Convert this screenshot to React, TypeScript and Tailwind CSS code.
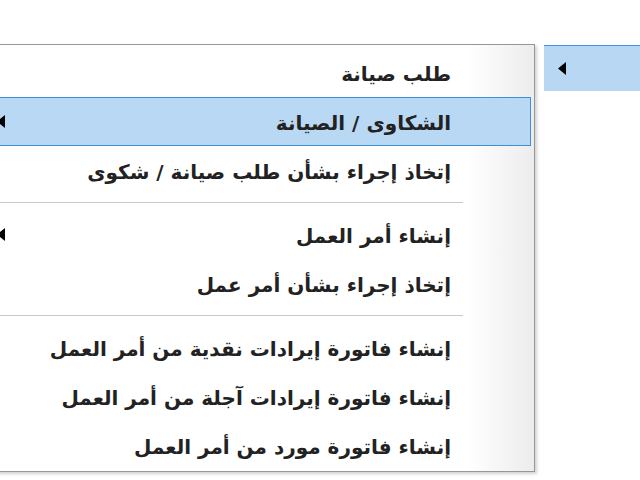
type MenuEntry =
  | { kind: "item"; label: string; submenu?: boolean; active?: boolean }
  | { kind: "separator" };

const entries: MenuEntry[] = [
  { kind: "item", label: "طلب صيانة" },
  { kind: "item", label: "الشكاوى / الصيانة", submenu: true, active: true },
  { kind: "item", label: "إتخاذ إجراء بشأن طلب صيانة / شكوى" },
  { kind: "separator" },
  { kind: "item", label: "إنشاء أمر العمل", submenu: true },
  { kind: "item", label: "إتخاذ إجراء بشأن أمر عمل" },
  { kind: "separator" },
  { kind: "item", label: "إنشاء فاتورة إيرادات نقدية من أمر العمل" },
  { kind: "item", label: "إنشاء فاتورة إيرادات آجلة من أمر العمل" },
  { kind: "item", label: "إنشاء فاتورة مورد من أمر العمل" },
];

function Arrow() {
  return (
    <svg width="8" height="13" viewBox="0 0 8 13" className="shrink-0">
      <path d="M8 0 L8 13 L0 6.5 Z" fill="#000" />
    </svg>
  );
}

export default function App() {
  return (
    <div
      className="w-[640px] h-[480px] overflow-hidden bg-white flex items-start pt-[44px]"
      style={{ fontFamily: '"DejaVu Sans", Tahoma, sans-serif' }}
    >
      <div
        dir="rtl"
        className="ml-[-20px] w-[555px] shrink-0 border border-[#979797] bg-gradient-to-l from-[#ececec] via-white via-[12%] to-white pt-[3px] pb-[1px] shadow-[2px_2px_3px_rgba(0,0,0,0.18)]"
      >
        {entries.map((entry, i) =>
          entry.kind === "separator" ? (
            <div key={i} className="h-[15px] flex items-center">
              <div className="h-[2px] w-full mr-[71px] bg-[#c9c9c9] border-b border-white" />
            </div>
          ) : (
            <div
              key={i}
              className={
                "h-[49px] mx-[3px] flex items-center justify-between pr-[79px] pl-[12px] text-[20px] font-bold text-[#222] " +
                (entry.active ? "bg-[#b9d8f3] border border-[#3a8fe0]" : "border border-transparent")
              }
            >
              <span className="whitespace-nowrap pt-[3px]">{entry.label}</span>
              {entry.submenu ? <Arrow /> : null}
            </div>
          )
        )}
      </div>
      <div className="ml-[9px] mt-[1px] h-[46px] w-[120px] shrink-0 bg-[#b7d7f3] border-t border-[#3d95e4] flex items-center pl-[14px]">
        <Arrow />
      </div>
    </div>
  );
}
